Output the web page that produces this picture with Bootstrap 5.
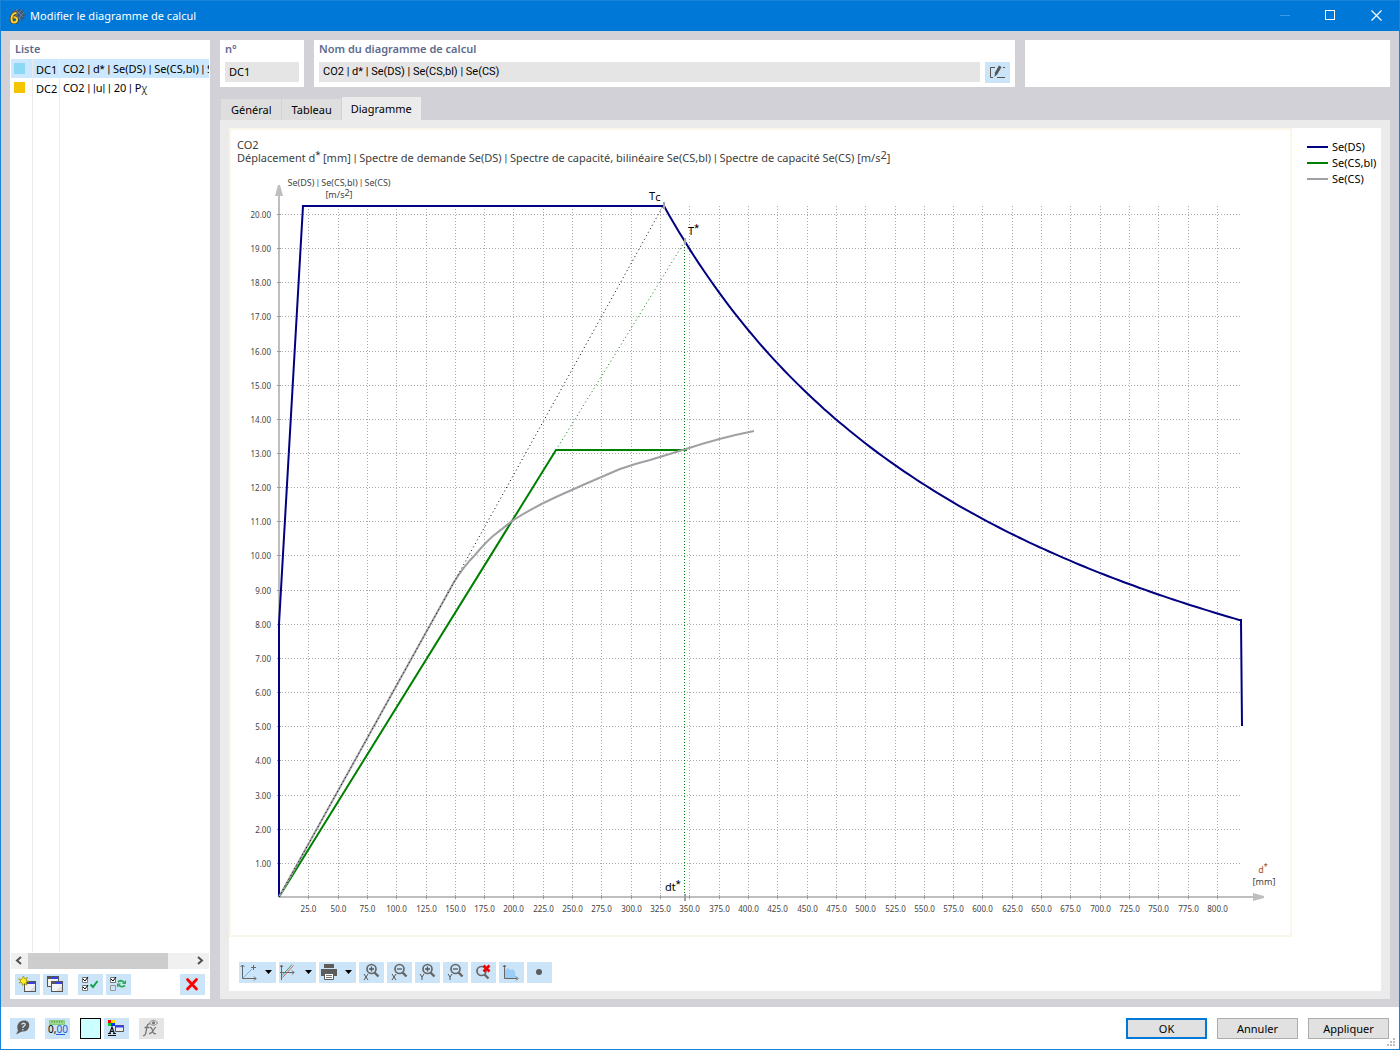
<!DOCTYPE html>
<html lang="fr">
<head>
<meta charset="utf-8">
<meta name="viewport" content="width=device-width, initial-scale=1">
<title>Modifier le diagramme de calcul</title>
<link href="https://cdn.jsdelivr.net/npm/bootstrap@5.3.0/dist/css/bootstrap.min.css" rel="stylesheet">
<style>
body{font-family:"Noto Sans","Open Sans",sans-serif;font-size:11px;line-height:18px;color:#000;background:#fff}
.win{min-height:100vh;border:1px solid #1883d7}
.titlebar{background:#0078d7;color:#fff;height:30px;padding-left:8px}
.titlebar h1{font-size:11px;line-height:30px;font-weight:400;padding-left:5px}
.sysbtn{width:46px;height:30px;padding:0;border:0;background:none;display:block}
.sysbtn svg{display:block}
.workspace{background:#d2d1d7;padding:9px 9px 8px;gap:10px}
.pane{background:#fff}
.cap{color:#5e6b8e;font-weight:600;font-size:11px;line-height:18px}
.bar,.star{font-family:Roboto,sans-serif}
.sidebar{width:200px}
.sidebar .cap{padding-left:5px}
.items{margin:1px 1px 0;background:linear-gradient(#ebebeb,#ebebeb) 21px 0/1px 100% no-repeat,linear-gradient(#ebebeb,#ebebeb) 48px 0/1px 100% no-repeat;overflow:hidden}
.items table{width:100%;table-layout:fixed;border-collapse:separate;border-spacing:0}
.items td{height:18px;padding:1px 0 0 3px;line-height:17px;white-space:nowrap;overflow:hidden}
.items td+td{border-left:1px solid #ebebeb}
.items .sel td{background:#cce8ff}
.sw{display:block;width:11px;height:11px;margin-bottom:2px}
.chi{font-size:10px;color:#333}
.scroller{height:16px;margin:1px 1px 0;background:#f0f0f0}
.scroller .thumb{width:140px;background:#cdcdcd}
.scroller button{width:17px;border:0;padding:0;background:none;line-height:0}
.side-tools{padding:5px 5px 4px;gap:3px}
.ib{width:25px;height:21px;padding:0;border:0;border-radius:0;background:#cce4f7;display:block;line-height:0;flex:none}
.ib.wide{width:37px}
.ib.off{background:#e5e5e5}
.gap-s{margin-left:7px}
.box-no{width:84px;padding:0 5px 4px}
.box-name{flex:691 1 0;padding:0 5px 4px}
.box-free{flex:365 1 0}
.name-row{gap:5px}
.top{height:47px;gap:10px}
.fld{display:block;height:20px;margin-top:4px;width:100%;border:0;border-radius:0;background:#e5e5e5;padding:0 4px;font-size:11px;line-height:20px;color:#000}
.fld.formula{font-family:Roboto,"Noto Sans",sans-serif}
.tabs{padding-top:10px}
.tabs button{border:0;border-left:1px solid #d2d1d7;background:#dedede;padding:0 9px 0 10px;height:21px;line-height:20px;color:#000;margin-top:2px}
.tabs button.on{background:#ebebeb;height:23px;margin-top:0;line-height:24px;padding:0 9px}
.tabpage{background:#ebebeb;padding:8px 9px}
.chartbox{border:2px solid #fbf6ea;min-width:0}
.chartbox header{padding:8px 6px 1px;line-height:13px;color:#404040}
.chartbox header div{height:13px}
.rise{display:inline-block;line-height:0;position:relative;top:-3px}
.legend{width:89px;padding:11px 0 0 15px}
.legend li{line-height:16px;gap:4px;white-space:nowrap}
.legend i{width:21px;height:2px;display:block}
.plot{display:block;width:100%;height:auto}
.plot text{font-family:"Noto Sans","Open Sans",sans-serif}
.tick{font-size:8px;fill:#444}
.axis-name{font-size:9px;fill:#444}
.mark-name{font-size:11px;fill:#000}
.charttools{padding:25px 10px 8px;gap:3px}
.footbar{height:42px;padding:0 10px 0 9px}
.foot-tools{gap:10px}
.foot-pair{gap:3px}
.dlg{width:81px;height:21px;border:1px solid #adadad;border-radius:0;background:#e1e1e1;color:#000;padding:0;font-size:11px;line-height:19px}
.dlg.main{border:2px solid #0078d7;line-height:17px}
.colr{width:21px;height:21px;border:1px solid #000;background:#ccffff;padding:0}
.grip{right:3px;bottom:2px}
</style>
<script src="https://cdn.jsdelivr.net/npm/bootstrap@5.3.0/dist/js/bootstrap.bundle.min.js"></script>
</head>
<body>
<svg width="0" height="0" class="position-absolute" aria-hidden="true">
  <defs>
    <g id="i-window"><rect x="0" y="0" width="11" height="10" fill="#f2f2f2" stroke="#555"/><path d="M.5 1.500h10" stroke="#555" stroke-width="2"/><path d="M4 1.500h6" stroke="#3440f0" stroke-width="2"/><path d="M5 9.500 10.500 4v5.500z" fill="#ddd"/></g>
    <g id="i-lens"><circle cx="14" cy="8" r="4.500" fill="none" stroke="#666" stroke-width="1.700"/><path d="m17 11.500 4 4" stroke="#666" stroke-width="2.400"/></g>
    <g id="i-x"><path d="m5 12 4 6M9 12l-4 6" stroke="#555" fill="none"/></g>
    <g id="i-y"><path d="m5 12 2 3 2-3M7 15v3" stroke="#555" fill="none"/></g>
    <path id="i-drop" d="M26 8h7l-3.500 4z" fill="#000"/>
  </defs>
</svg>
<div class="win d-flex flex-column position-relative">
  <header class="titlebar d-flex align-items-center">
    <svg width="16" height="16" viewBox="0 0 16 16"><path d="m2 5 5-4 7 1 2 5-3 6-5-5z" fill="#3c5878"/><path d="m4 4 8 8M7 2l7 7M3 6l6-5M6 8l7-6M10 10l5-6" stroke="#7395b8" stroke-width=".7"/><path d="M7.500 5C4 5 2.500 8 2.500 11c0 2.500 1 3.500 2.500 3.500S8 13.500 8 11.500 6.500 9 4.500 9.500" fill="none" stroke="#4c4020" stroke-width="3.400"/><path d="M7.500 5C4 5 2.500 8 2.500 11c0 2.500 1 3.500 2.500 3.500S8 13.500 8 11.500 6.500 9 4.500 9.500" fill="none" stroke="#ffd235" stroke-width="2"/></svg>
    <h1 class="m-0 flex-grow-1">Modifier le diagramme de calcul</h1>
    <button class="sysbtn" type="button" aria-label="Réduire" disabled><svg width="46" height="30"><path d="M19 14.500h10" stroke="#3c9ae6"/></svg></button>
    <button class="sysbtn" type="button" aria-label="Agrandir"><svg width="46" height="30"><rect x="18.500" y="9.500" width="9" height="9" fill="none" stroke="#fff"/></svg></button>
    <button class="sysbtn" type="button" aria-label="Fermer"><svg width="46" height="30"><path d="m18.500 9.500 10 10m0-10-10 10" stroke="#fff" stroke-width="1.200"/></svg></button>
  </header>

  <main class="workspace d-flex flex-grow-1">
    <aside class="sidebar pane d-flex flex-column flex-shrink-0">
      <div class="cap">Liste</div>
      <div class="items flex-grow-1">
        <table>
          <colgroup><col style="width:21px"><col style="width:27px"><col></colgroup>
          <tr class="sel"><td><span class="sw" style="background:#8dd8f5"></span></td><td>DC1</td><td>CO2 <span class="bar">|</span> d<span class="star">*</span> <span class="bar">|</span> Se(DS) <span class="bar">|</span> Se(CS,bl) <span class="bar">|</span> Se(CS)</td></tr>
          <tr><td><span class="sw" style="background:#f5c400"></span></td><td>DC2</td><td>CO2 <span class="bar">|</span> <span class="bar">|</span>u<span class="bar">|</span> <span class="bar">|</span> 20 <span class="bar">|</span> P<span class="chi">χ</span></td></tr>
        </table>
      </div>
      <div class="scroller d-flex">
        <button type="button" aria-label="Défiler à gauche"><svg width="17" height="16"><path d="m10 4-4 3.500 4 3.500" fill="none" stroke="#505050" stroke-width="2"/></svg></button>
        <div class="thumb"></div>
        <button type="button" class="ms-auto" aria-label="Défiler à droite"><svg width="17" height="16"><path d="m6 4 4 3.500L6 11" fill="none" stroke="#505050" stroke-width="2"/></svg></button>
      </div>
      <div class="side-tools d-flex">
        <button class="ib" type="button" aria-label="Nouveau"><svg width="25" height="21"><use href="#i-window" x="9.500" y="7.500"/><path d="m8.500 2 1 3 3-1.500-1.500 3 3 1-3 .5 1 3-3-1.500-1.500 2-.5-3-3 .5 2-2-2.500-2 3 .5z" fill="#ffee20" stroke="#9a8a00" stroke-width=".7"/></svg></button>
        <button class="ib" type="button" aria-label="Copier"><svg width="25" height="21"><use href="#i-window" x="4.500" y="2.500"/><use href="#i-window" x="8.500" y="7.500"/></svg></button>
        <button class="ib gap-s" type="button" aria-label="Tout sélectionner"><svg width="25" height="21" fill="none"><path d="M4.500 3.500h5v5h-5zM4.500 11.500h5v5h-5z" fill="#fff" stroke="#777"/><path d="m5 5 2 2 3-4M5 13l2 2 3-4" stroke="#000"/><path d="m12.500 10.500 2.500 2.500 4.500-6" stroke="#12a348" stroke-width="2"/></svg></button>
        <button class="ib" type="button" aria-label="Inverser la sélection"><svg width="25" height="21" fill="none"><path d="M4.500 3.500h5v5h-5z" fill="#fff" stroke="#777"/><path d="M4.500 11.500h5v5h-5z" stroke="#999"/><path d="m5 5 2 2 3-4" stroke="#000"/><path d="M12 8c2-2 4-1.500 6 .5M19 11.500c-2 1.500-4 1.500-6 0" stroke="#2eaa5b" stroke-width="1.800"/><path d="M20 6v4h-4zM11 13.500v-4h4z" fill="#2eaa5b"/></svg></button>
        <button class="ib ms-auto" type="button" aria-label="Supprimer"><svg width="25" height="21"><path d="m7.500 5.500 9 9.500m0-9.500-9 9.500" stroke="#f00" stroke-width="2.800" stroke-linecap="round"/></svg></button>
      </div>
    </aside>

    <section class="flex-grow-1 d-flex flex-column" style="min-width:0">
      <div class="top d-flex">
        <div class="pane box-no"><label class="cap d-block" for="no">n°</label><input id="no" class="fld" value="DC1" readonly></div>
        <div class="pane box-name">
          <label class="cap d-block" for="nom">Nom du diagramme de calcul</label>
          <div class="name-row d-flex">
            <input id="nom" class="fld formula flex-grow-1" value="CO2 | d* | Se(DS) | Se(CS,bl) | Se(CS)" readonly>
            <button class="ib mt-1" type="button" aria-label="Modifier le nom"><svg width="25" height="21"><path d="M10 5.500H5.500v10H8M18 5.500h2M12 15.500h8" fill="none" stroke="#555"/><path d="m10 10.500 4-7 2.500 1.500-4 7-3 3z" fill="#555"/></svg></button>
          </div>
        </div>
        <div class="pane box-free"></div>
      </div>

      <div class="tabs d-flex" role="tablist">
        <button type="button" role="tab">Général</button>
        <button type="button" role="tab">Tableau</button>
        <button type="button" role="tab" class="on" aria-selected="true">Diagramme</button>
      </div>

      <div class="tabpage flex-grow-1 d-flex">
        <div class="pane flex-grow-1" style="min-width:0">
          <div class="d-flex">
            <div class="chartbox flex-grow-1">
              <header><div>CO2</div><div>Déplacement d<span class="rise star">*</span> [mm] <span class="bar">|</span> Spectre de demande Se(DS) <span class="bar">|</span> Spectre de capacité, bilinéaire Se(CS,bl) <span class="bar">|</span> Spectre de capacité Se(CS) [m/s<span class="rise">2</span>]</div></header>
              <svg class="plot" viewBox="0 0 1059 770" role="img" aria-label="Spectres de demande et de capacité">
                <g transform="translate(48 732)">
                  <g id="grid" stroke="#a9a9a9" stroke-dasharray="1 2"></g>
                  <path d="M0 0V-704M0 0H976" stroke="#bfbfbf" stroke-width="2"/>
                  <path d="M-4-701-1-712H1L4-701zM974-4 985-1V1L974 4z" fill="#bfbfbf"/>
                  <g id="ticks" stroke="#999"></g>
                  <g id="labels"></g>
                  <path id="demand" fill="none" stroke="#000080" stroke-width="2"/>
                  <path d="M0 0 277-447H408" fill="none" stroke="#008000" stroke-width="2"/>
                  <path d="M0 0 155-279 175-315Q185-331 196-342 206-354 214-361 223-368 233-376 253-389 277-400 308-414 341-428 355-433 371-437L407-448Q440-459 475-466" fill="none" stroke="#a0a0a4" stroke-width="2"/>
                  <path d="M0 0 384-691" stroke="#000" stroke-dasharray="1 3" fill="none"/>
                  <path d="M277-447 406-656" stroke="#008000" stroke-dasharray="1 3" fill="none"/>
                  <path d="M405.500-656V0" stroke="#008000" stroke-dasharray="1 2" fill="none"/>
                  <path d="M385-695v7M406-659v7M406-3v7" stroke="#a0a0a4" stroke-width="2"/>
                  <g class="axis-name" text-anchor="middle">
                    <text x="60" y="-711">Se(DS) <tspan class="bar">|</tspan> Se(CS,bl) <tspan class="bar">|</tspan> Se(CS)</text>
                    <text x="60" y="-699">[m/s<tspan dy="-2">2</tspan><tspan dy="2">]</tspan></text>
                    <text x="984" y="-24" fill="#a0522d">d<tspan class="star" dy="-3">*</tspan></text>
                    <text x="985" y="-12">[mm]</text>
                  </g>
                  <g class="mark-name">
                    <text x="370" y="-697">T<tspan dx="1" dy="1">c</tspan></text>
                    <text x="409" y="-662">T<tspan class="star" dy="-3">*</tspan></text>
                    <text x="386" y="-6">dt<tspan class="star" dy="-3">*</tspan></text>
                  </g>
                </g>
              </svg>
            </div>
            <ul class="legend list-unstyled mb-0 flex-shrink-0">
              <li class="d-flex align-items-center"><i style="background:#000080"></i>Se(DS)</li>
              <li class="d-flex align-items-center"><i style="background:#008000"></i>Se(CS,bl)</li>
              <li class="d-flex align-items-center"><i style="background:#a0a0a4"></i>Se(CS)</li>
            </ul>
          </div>
          <div class="charttools d-flex">
            <button class="ib wide" type="button" aria-label="Axes"><svg width="37" height="21"><path d="M3.500 3v13.500H17M1.500 5l2-2 2 2M15 14.500l2 2-2 2M14.500 3v5M12 5.500h5" fill="none" stroke="#666"/><path d="m4 16 9-9" stroke="#69b4ee"/><use href="#i-drop"/></svg></button>
            <button class="ib wide" type="button" aria-label="Courbes"><svg width="37" height="21" fill="none"><path d="M2.500 3v15M1 10.500h14M1 5l1.500-2L4 5M13 8.500l2 2-2 2" stroke="#666"/><path d="m3 13.500 10-11" stroke="#34a56c"/><path d="m3.500 15.500 11-12" stroke="#d15b5b"/><use href="#i-drop"/></svg></button>
            <button class="ib wide" type="button" aria-label="Imprimer"><svg width="37" height="21"><path d="M5 2h10v4H5zM2 7h16v7H2z" fill="#5c5c5c"/><path d="M5.500 11.500h9v6h-9z" fill="#fff" stroke="#5c5c5c"/><path d="M7 13.500h6M7 15.500h6" stroke="#777"/><use href="#i-drop"/></svg></button>
            <button class="ib" type="button" aria-label="Agrandir X"><svg width="25" height="21"><use href="#i-lens" x="-1.500" y="-1"/><use href="#i-x"/><path d="M10 7h5M12.500 4.500v5" stroke="#555" stroke-width="1.300"/></svg></button>
            <button class="ib" type="button" aria-label="Réduire X"><svg width="25" height="21"><use href="#i-lens" x="-1.500" y="-1"/><use href="#i-x"/><path d="M10 7h5" stroke="#555" stroke-width="1.300"/></svg></button>
            <button class="ib" type="button" aria-label="Agrandir Y"><svg width="25" height="21"><use href="#i-lens" x="-1.500" y="-1"/><use href="#i-y"/><path d="M10 7h5M12.500 4.500v5" stroke="#555" stroke-width="1.300"/></svg></button>
            <button class="ib" type="button" aria-label="Réduire Y"><svg width="25" height="21"><use href="#i-lens" x="-1.500" y="-1"/><use href="#i-y"/><path d="M10 7h5" stroke="#555" stroke-width="1.300"/></svg></button>
            <button class="ib" type="button" aria-label="Annuler le zoom"><svg width="25" height="21"><use href="#i-lens" x="-3.500" y="1"/><path d="m12.500 3.500 6 6m0-6-6 6" stroke="#f00000" stroke-width="2.600"/></svg></button>
            <button class="ib" type="button" aria-label="Remplissage"><svg width="25" height="21"><path d="M6 16V8l3-2 2 2 3-1 2 3 1 6z" fill="#9ccdf8"/><path d="M5.500 3v13.500H18M4 5l1.500-2L7 5M17 14.500l2 2-2 2" fill="none" stroke="#666"/></svg></button>
            <button class="ib" type="button" aria-label="Point"><svg width="25" height="21"><circle cx="12" cy="10" r="3" fill="#5c5c5c"/></svg></button>
          </div>
        </div>
      </div>
    </section>
  </main>

  <footer class="footbar d-flex align-items-center">
    <div class="foot-tools d-flex">
      <button class="ib" type="button" aria-label="Aide"><svg width="25" height="21"><path d="M14 2.500c4 0 6 2.500 5 6.500-.8 3-3 4.500-6 4.500-2 0-3 1-7 3l2-4C6 8 8.500 2.500 14 2.500z" fill="#5c5c5c"/><path d="M11.500 6.500c1-2 4.500-1.500 3.500.7L13 9v1M12.800 11v1.300" fill="none" stroke="#cce4f7" stroke-width="1.300"/></svg></button>
      <button class="ib" type="button" aria-label="Unités"><svg width="25" height="21"><path d="M4.500 2.500h15v4h-15z" fill="#9bdc8c" stroke="#8acb7b"/><path d="M7 3v1.500M9.500 3v1.500M12 3v1.500M14.500 3v1.500M17 3v1.500" stroke="#568a4b"/><text x="3" y="15" font-size="10" font-family="Noto Sans, sans-serif">0,<tspan fill="#2060d0">00</tspan></text><path d="M11 16.500h9" stroke="#2060d0"/></svg></button>
      <div class="foot-pair d-flex">
        <button class="colr" type="button" aria-label="Couleur"></button>
        <button class="ib" type="button" aria-label="Affichage"><svg width="25" height="21"><path d="M4 2h3v3H4z" fill="#f00"/><path d="M7 2h4v3H7z" fill="#fd0"/><path d="M4 5h3v3H4z" fill="#0c2"/><path d="M7 5h4v3H7z" fill="#03f"/><path d="m5.500 16 2.500-7 2.500 7M6.500 13.500h3M4 15.500h3M9 15.500h3M4 17.500h8" fill="none" stroke="#111" stroke-width="1.200"/><path d="M11.500 7.500h8v6h-8z" fill="#eee" stroke="#555"/><path d="M11 8.500h9" stroke="#3440f0" stroke-width="2"/></svg></button>
      </div>
      <button class="ib off" type="button" aria-label="Formule" disabled><svg width="25" height="21" fill="none"><path d="M4 17.500c3 1 3-4 4-9 .5-2 1.500-3 3-2.500M5.500 9.500h5M11 9.500c3-1 2 8 6 6M17 9.500c-2-1-3 7-7 6" stroke="#777" stroke-width="1.300"/><path d="M10.500 5c2-3.500 6-3.500 8 0-2 3-6 3-8 0z" stroke="#888"/><circle cx="14.500" cy="4.800" r="1.600" fill="#777"/></svg></button>
    </div>
    <div class="foot-tools ms-auto d-flex">
      <button class="dlg main" type="button">OK</button>
      <button class="dlg" type="button">Annuler</button>
      <button class="dlg" type="button">Appliquer</button>
    </div>
    <svg class="grip position-absolute" width="9" height="9" fill="#bfbfbf"><path d="M6 0h2v2H6zM3 3h2v2H3zM6 3h2v2H6zM0 6h2v2H0zM3 6h2v2H3zM6 6h2v2H6z"/></svg>
  </footer>
</div>
<script>
const stepX = 29.31, stepY = 34.15;
let grid = '', ticks = '', labels = '';
for (let i = 1; i <= 32; i++) {
  const x = Math.round(i * stepX) + 0.5;
  grid += `<path d="M${x} 0V-691"/>`;
  ticks += `<path d="M${x}-2v4"/>`;
  labels += `<text class="tick" text-anchor="middle" x="${x}" y="15">${(i * 25).toFixed(1)}</text>`;
}
for (let i = 1; i <= 20; i++) {
  const y = -Math.round(i * stepY) + 0.5;
  grid += `<path d="M0 ${y}H961"/>`;
  ticks += `<path d="M-2 ${y}h4"/>`;
  labels += `<text class="tick" text-anchor="end" x="-8" y="${y + 3}">${i.toFixed(2)}</text>`;
}
document.getElementById('grid').innerHTML = grid;
document.getElementById('ticks').innerHTML = ticks;
document.getElementById('labels').innerHTML = labels;
// The demand spectrum falls off as 1/d after the corner Tc
let d = 'M0 0V-273L24-691H385';
for (let x = 390; x < 962; x += 5) d += `L${x} ${(-691 * 385 / x).toFixed(1)}`;
document.getElementById('demand').setAttribute('d', d + 'L962-277 963-171');
</script>
</body>
</html>
